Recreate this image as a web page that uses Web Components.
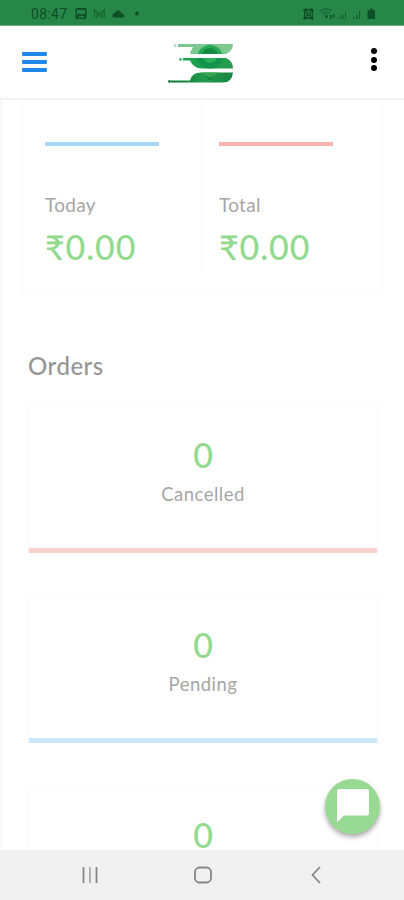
<!DOCTYPE html>
<html lang="en"><head><meta charset="utf-8"><title>Dashboard</title>
<style>html,body{margin:0;height:100%;background:#fff}</style></head><body>
<dash-screen></dash-screen>
<script>
const make=(name,html,setup)=>customElements.define(name,class extends HTMLElement{
  constructor(){super();this.attachShadow({mode:'open'}).innerHTML=html;}
  connectedCallback(){if(setup)setup(this);}
});
make('status-bar',`<style>
:host{display:flex;box-sizing:border-box;height:25px;background:#268749;box-shadow:0 1px 0 #6eaf84;position:relative;z-index:2;padding:0 27px 0 31px;align-items:center;justify-content:space-between;font:14px Roboto,sans-serif;color:#0d4f26}
div{display:flex;align-items:center;height:25px;padding-top:2px;box-sizing:border-box}
svg{display:block}span{letter-spacing:.3px;width:36px;white-space:nowrap}
</style>
<div><span>08:47</span><svg width="72" height="14" viewBox="0 0 72 14" fill="#0d4f26">
<path fill-rule="evenodd" d="M9.500 1h9q1 0 1 1v9q0 1-1 1h-9q-1 0-1-1V2q0-1 1-1zM10 3v5l2.500-2 2 2 2-2 1.500 2V3zM10 10.500h8l-2-2-2 1-1-1z"/>
<g fill="none" stroke="#17682f" stroke-width="1.100"><path d="M27.500 11V3l5 4 5-4v8M29 11l3.500-4 3.500 4M30 5v5M35.500 5v5"/></g>
<path d="M47 10.500q-2-.5-1.500-3 1-1.500 2.500-1.500 2-4 5.500-1.500l1 2q3 0 3 4z"/><circle cx="70" cy="6.500" r="1.900"/></svg></div>
<div><svg width="76" height="14" viewBox="0 0 76 14" fill="#0d4f26">
<path d="M2 3l3-2 1 1h3l1-1 3 2-1 2v5l1 2-2 1-1-1H5l-2 1-1-1 1-2V5z"/><circle cx="7.500" cy="7" r="3" fill="none" stroke="#268749"/><path d="M7.500 5v2H9" stroke="#268749" fill="none"/>
<g fill="none" stroke="#18683a" stroke-width="1.300"><path d="M19 4q6-4 12 0M21 6.500q4-3 8 0M23 8.500q2-1.500 4 0"/></g><path d="M24 9h3l-1.500 3zM29 8h1.500v4H29zM32 7h1.500v4H32z"/>
<path fill="#165c31" d="M38 10h1.500v2H38zM41 8h1.500v4H41zM44 5h1v7h-1zM52 10h1.500v2H52zM55 8h1.500v4H55zM58 4h1v8h-1z"/>
<path d="M66.500 3H69V1.500h2.500V3H74v9h-7.500z"/></svg></div>`);
make('brand-logo',`<style>:host{display:block;width:68px;height:42px}svg{display:block}</style>
<svg width="68" height="42" viewBox="167 41 68 42"><defs>
<linearGradient id="a"><stop stop-color="#7ac794"/><stop offset="1" stop-color="#80c78d"/></linearGradient>
<linearGradient id="b"><stop stop-color="#17a550"/><stop offset="1" stop-color="#269a4c"/></linearGradient>
<linearGradient id="c"><stop stop-color="#087434"/><stop offset=".5" stop-color="#23994b"/><stop offset="1" stop-color="#168442"/></linearGradient>
<clipPath id="t"><path d="M178 43h55q0 7-7 10h-36q1-4 3-7h-15z"/></clipPath>
<clipPath id="m"><path d="M183 57h43q7 3 7 10.500h-32q-8-1-11-8h-7z"/></clipPath>
<clipPath id="l"><path d="M171 79.500h19q2-8 11-8h32q-1 10-10 10h-52z"/></clipPath></defs>
<g clip-path="url(#t)"><path fill="url(#a)" d="M170 40h65v15h-65z"/><circle cx="210" cy="57" r="13" fill="#27a957"/><circle cx="210" cy="55" r="8" fill="#138b41"/></g>
<g clip-path="url(#m)"><path fill="url(#b)" d="M170 55h65v15h-65z"/><circle cx="210" cy="56" r="12" fill="#12924a"/><circle cx="210" cy="55" r="7" fill="#2caf59"/></g>
<g clip-path="url(#l)"><path fill="url(#c)" d="M170 70h65v15h-65z"/><path d="M201 71h18l-7 5-2 6-2-6z" fill="#38a351"/><path d="M207 75l3 2 3-2-2 4h-2z" fill="#127e3b"/></g>
<g><circle cx="175" cy="44.500" r="1.300" fill="#9cd5ac"/><circle cx="180.500" cy="58.500" r="1.400" fill="#47b66f"/><circle cx="169.500" cy="80.500" r="1.400" fill="#177c3d"/></g></svg>`);
make('app-header',`<style>
:host{display:flex;box-sizing:border-box;height:75px;background:#fff;border-bottom:2px solid #f3f3f3;padding:2px 27px 0 22px;align-items:center;position:relative;z-index:1}
brand-logo{margin:0 0 0 120px}.menu{display:grid;gap:4.300px;width:25px;margin-bottom:1px}.menu i{height:4px;border-radius:1px;background:#1e88e9}
.more{display:grid;gap:2.300px;margin:0 0 6px auto}.more i{width:6px;height:6px;border-radius:50%;background:#000}
</style><div class="menu"><i></i><i></i><i></i></div><brand-logo></brand-logo><div class="more"><i></i><i></i><i></i></div>`);
make('earn-stat',`<style>
:host{display:block;font-family:Lato,sans-serif}
.bar{height:4px;width:114px;background:var(--c);margin-bottom:47px}
.label{font-size:19px;line-height:24px;color:#a6a6a6;letter-spacing:.3px}
.val{font-size:34px;line-height:42px;margin-top:9px;color:#92da8e;font-weight:500;white-space:nowrap;letter-spacing:.9px}
</style><div class="bar"></div><div class="label"><slot></slot></div><div class="val">₹0.00</div>`);
make('order-card',`<style>
:host{display:block;box-sizing:border-box;height:148px;border:1px solid #fafafa;border-bottom:5px solid var(--c);border-radius:2px;text-align:center;font-family:Lato,sans-serif;padding-top:35px;flex:none}
.n{font-size:34px;line-height:28px;color:#92da8e;font-weight:500}.t{font-size:18.500px;line-height:24px;color:#a6a6a6;letter-spacing:.5px;margin-top:13px}
</style><div class="n">0</div><div class="t"><slot></slot></div>`);
make('chat-button',`<style>
:host{display:grid;place-items:center;width:55px;height:55px;border-radius:50%;background:#98da93;box-shadow:0 3px 5px #0005}
svg{display:block;margin-top:-2px}</style><svg width="32" height="33" viewBox="0 0 32 33"><path fill="#fff" d="M2 0h28q2 0 2 2v22.500q0 2-2 2H7L0 33V2Q0 0 2 0z"/></svg>`);
make('nav-bar',`<style>
:host{display:block;height:50px;background:#f0f0f0}svg{display:block}</style>
<svg width="404" height="50" fill="none" stroke="#858585" stroke-width="1.800"><path d="M83.500 17v16M96.500 17v16"/><path d="M90 17v16" stroke="#aaa"/><rect x="195" y="17.500" width="16" height="15" rx="4.500"/><path d="M320 17l-7.500 8 7.500 8"/></svg>`);
make('dash-screen',`<style>
:host{display:flex;flex-direction:column;width:404px;height:900px;overflow:hidden;position:relative;background:#fff}
main{flex:1;min-height:0;overflow:hidden;border-left:2px solid #f8f8f8;padding:0 26px 0 26px;font-family:Lato,sans-serif}
.earn{display:grid;grid-template-columns:179px 1fr;box-sizing:border-box;width:360px;height:195px;margin-left:-6px;border:1px solid #fafafa;border-top:0}
.earn>*{box-sizing:border-box;height:171px;padding:42px 0 0 22px}.earn>:last-child{border-left:1px solid #f9f9f9;padding-left:16px}
h2{margin:57px 0 25px;font-size:24px;line-height:28px;font-weight:500;color:#959595;letter-spacing:.5px}
.list{display:flex;flex-direction:column;gap:42px}
chat-button{position:absolute;left:325px;top:779px}
</style><status-bar></status-bar><app-header></app-header>
<main><section class="earn"><earn-stat style="--c:#a6d5f5">Today</earn-stat><earn-stat style="--c:#f5b5ae">Total</earn-stat></section>
<h2>Orders</h2><div class="list"><order-card style="--c:#fad2cd">Cancelled</order-card><order-card style="--c:#cfe7fa">Pending</order-card><order-card style="--c:#cdeccb"></order-card></div></main>
<nav-bar></nav-bar><chat-button></chat-button>`);
</script></body></html>
